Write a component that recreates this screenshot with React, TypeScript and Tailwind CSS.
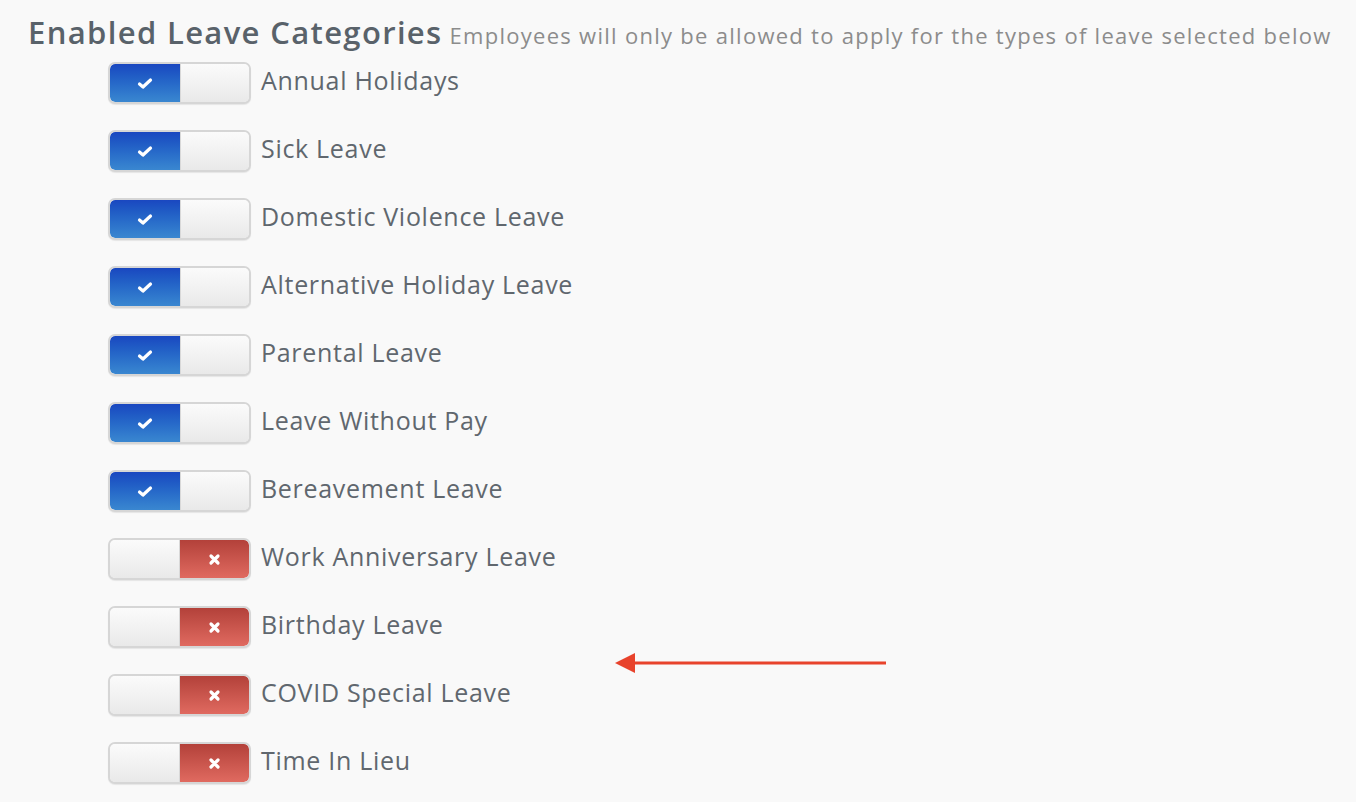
import React from "react";

const items: { label: string; on: boolean }[] = [
  { label: "Annual Holidays", on: true },
  { label: "Sick Leave", on: true },
  { label: "Domestic Violence Leave", on: true },
  { label: "Alternative Holiday Leave", on: true },
  { label: "Parental Leave", on: true },
  { label: "Leave Without Pay", on: true },
  { label: "Bereavement Leave", on: true },
  { label: "Work Anniversary Leave", on: false },
  { label: "Birthday Leave", on: false },
  { label: "COVID Special Leave", on: false },
  { label: "Time In Lieu", on: false },
];

function Check() {
  return (
    <svg width="16" height="13" viewBox="0 0 16 13">
      <path d="M2.5 7 L6 10 L13.5 3" fill="none" stroke="white" strokeWidth="3.2" strokeLinecap="round" strokeLinejoin="round" />
    </svg>
  );
}

function Cross() {
  return (
    <svg width="13" height="13" viewBox="0 0 13 13">
      <path d="M3 3 L10 10 M10 3 L3 10" fill="none" stroke="white" strokeWidth="3.2" strokeLinecap="round" />
    </svg>
  );
}

function Toggle({ on }: { on: boolean }) {
  return (
    <div className="w-[143px] h-[42px] shrink-0 rounded-[7px] border-2 border-[#d6d6d6] bg-[#f4f4f4] flex overflow-hidden shadow-[0_1px_1px_rgba(0,0,0,0.08)]">
      {on ? (
        <>
          <div className="w-[70px] h-full flex items-center justify-center bg-gradient-to-b from-[#1a47c0] to-[#3a87d0] rounded-l-[5px]">
            <Check />
          </div>
          <div className="flex-1 h-full border-l border-[#d8d8d8] bg-gradient-to-b from-[#fbfbfb] to-[#e9e9e9]" />
        </>
      ) : (
        <>
          <div className="w-[70px] h-full bg-gradient-to-b from-[#fbfbfb] to-[#e9e9e9] border-r border-[#d8d8d8]" />
          <div className="flex-1 h-full flex items-center justify-center bg-gradient-to-b from-[#b3413a] to-[#e06a60] rounded-r-[5px]">
            <Cross />
          </div>
        </>
      )}
    </div>
  );
}

export default function App() {
  return (
    <div
      className="relative w-[1356px] h-[802px] bg-[#f9f9f9] overflow-hidden"
      style={{ fontFamily: '"Open Sans", "Liberation Sans", sans-serif' }}
    >
      <div className="flex items-baseline pl-[28px] pt-[12px] h-[50px] whitespace-nowrap">
        <h1 className="text-[31px] font-semibold text-[#59626a] tracking-[1.35px] leading-[40px]">
          Enabled Leave Categories
        </h1>
        <span className="ml-[7px] text-[22px] text-[#8c8c8c] tracking-[1.28px]">
          Employees will only be allowed to apply for the types of leave selected below
        </span>
      </div>
      <div className="pl-[108px] pt-[12px] flex flex-col">
        {items.map((it) => (
          <div key={it.label} className="h-[68px] flex items-start">
            <Toggle on={it.on} />
            <span className="ml-[10px] text-[25px] leading-[36px] text-[#60676e] tracking-[0.7px] whitespace-nowrap">
              {it.label}
            </span>
          </div>
        ))}
      </div>
      <svg className="absolute left-[612px] top-[650px]" width="280" height="28" viewBox="0 0 280 28">
        <line x1="20" y1="13" x2="274" y2="13" stroke="#e8432c" strokeWidth="3" />
        <polygon points="3,13 23,3 23,23" fill="#e8432c" />
      </svg>
    </div>
  );
}
